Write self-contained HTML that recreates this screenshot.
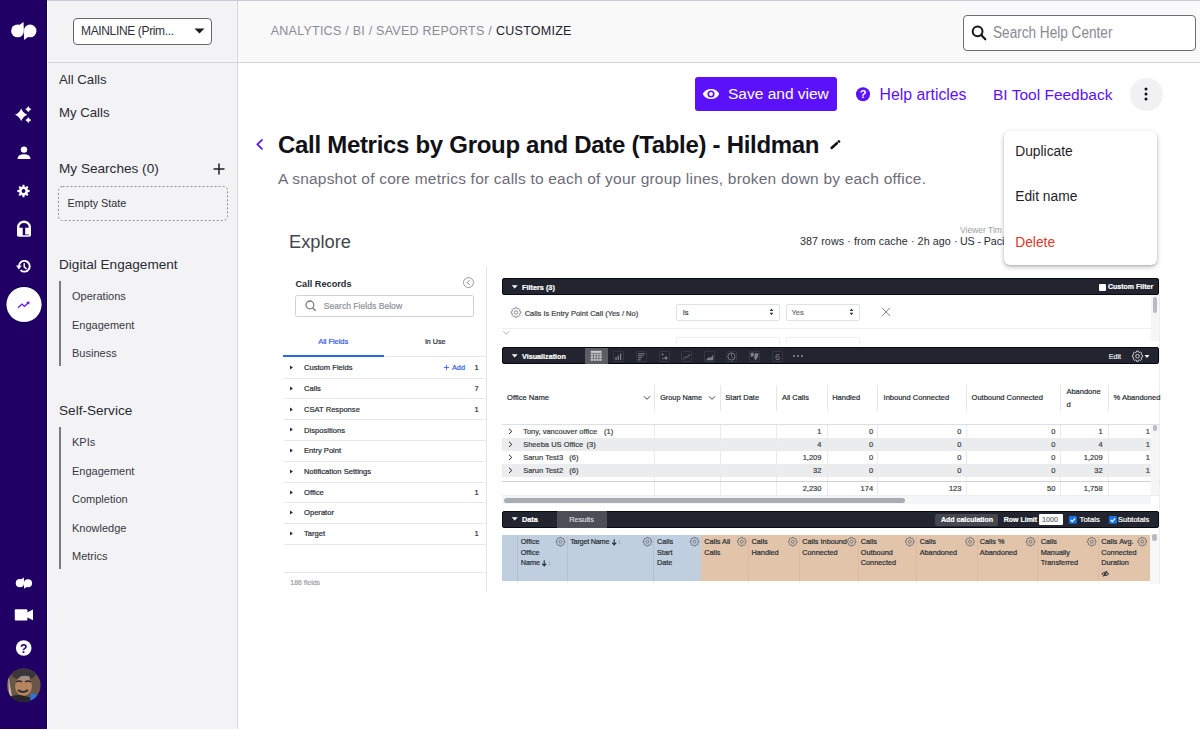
<!DOCTYPE html>
<html><head><meta charset="utf-8">
<style>
*{margin:0;padding:0;box-sizing:border-box}
html,body{width:1200px;height:730px;overflow:hidden;background:#fff;font-family:"Liberation Sans",sans-serif}
.a{position:absolute}
.t{position:absolute;white-space:nowrap;line-height:1}
.k{-webkit-text-stroke:0.2px currentColor}
</style></head><body>
<div class="a" style="left:0.00px;top:0.00px;width:47.00px;height:729.00px;background:#210066;"></div>
<div class="a" style="left:46.00px;top:0.00px;width:1.00px;height:729.00px;background:#0c004a;"></div>
<svg class="a" style="left:0;top:0" width="47" height="729" viewBox="0 0 47 729">
 <g fill="#fff">
  <!-- logo -->
  <circle cx="17.6" cy="30.9" r="6.45"/>
  <polygon points="19.6,24.8 23.5,21.9 24.1,31 19,31"/>
  <circle cx="30.1" cy="30.9" r="6.35"/>
  <polygon points="28,37 24.2,39.9 23.6,31 29,31"/>
  <path d="M24.1,24.5 L23.5,37.5" stroke="#210066" stroke-width="0.5" opacity="0.6"/>
  <!-- sparkles -->
  <path d="M21.2,108.6 Q22.936,113.064 27.4,114.8 Q22.936,116.536 21.2,121.0 Q19.464,116.536 15.0,114.8 Q19.464,113.064 21.2,108.6Z"/>
  <path d="M28.3,106.10000000000001 Q29.168,108.33200000000001 31.400000000000002,109.2 Q29.168,110.068 28.3,112.3 Q27.432000000000002,110.068 25.2,109.2 Q27.432000000000002,108.33200000000001 28.3,106.10000000000001Z"/>
  <path d="M28.3,116.9 Q29.168,119.132 31.400000000000002,120 Q29.168,120.868 28.3,123.1 Q27.432000000000002,120.868 25.2,120 Q27.432000000000002,119.132 28.3,116.9Z"/>
  <!-- person -->
  <circle cx="24" cy="149.6" r="3.2"/>
  <path d="M17.5,159 Q17.5,154.3 24,154.3 Q30.5,154.3 30.5,159Z"/>
  <!-- gear -->
  <path d="M27.83,189.77 L29.63,190.10 L29.63,191.90 L27.83,192.23 L27.43,193.19 L28.48,194.70 L27.20,195.98 L25.69,194.93 L24.73,195.33 L24.40,197.13 L22.60,197.13 L22.27,195.33 L21.31,194.93 L19.80,195.98 L18.52,194.70 L19.57,193.19 L19.17,192.23 L17.37,191.90 L17.37,190.10 L19.17,189.77 L19.57,188.81 L18.52,187.30 L19.80,186.02 L21.31,187.07 L22.27,186.67 L22.60,184.87 L24.40,184.87 L24.73,186.67 L25.69,187.07 L27.20,186.02 L28.48,187.30 L27.43,188.81Z M21.60,191.00 a1.9,1.9 0 1,0 3.80,0 a1.9,1.9 0 1,0 -3.80,0Z" fill-rule="evenodd"/>
  <!-- help -->
  <circle cx="23.7" cy="648" r="7.8"/>
 </g>
 <!-- headset -->
 <path fill="#fff" fill-rule="evenodd" d="M17,235 V227.4 A7,7 0 0 1 31,227.4 V235 Q31,236.8 29.2,236.8 H18.8 Q17,236.8 17,235 Z M19.2,227.7 A4.8,4.8 0 0 1 28.8,227.7 H25.2 V234.4 H29 V235.3 H22.7 V227.7 Z"/>
 <!-- history -->
 <g fill="none" stroke="#fff" stroke-width="1.9">
  <path d="M18.9,266.3 A5.4,5.4 0 1 1 20.5,270.1"/>
  <path d="M24.2,263.2 V266.8 L26.6,269" stroke-width="1.5"/>
 </g>
 <polygon fill="#fff" points="16,265.6 21.8,265.6 18.9,269.6"/>
 <!-- active analytics circle -->
 <circle cx="24" cy="304.5" r="18.4" fill="#0c004a"/><circle cx="24" cy="304.5" r="17.6" fill="#fff"/>
 <path d="M18,307.7 L22,304 L24.5,306.4 L28.2,302.8" fill="none" stroke="#5b12fb" stroke-width="1.25"/>
 <polygon fill="#5b12fb" points="26.3,301.9 29.6,301.4 29.1,304.7"/>
 <!-- small logo -->
 <g fill="#fff">
  <circle cx="19.9" cy="583.2" r="4.1"/>
  <polygon points="21.2,579.3 23.8,577.6 24.1,583.2 21,583.2"/>
  <circle cx="28" cy="583.2" r="4.05"/>
  <polygon points="26.6,587.1 24.2,588.8 23.8,583.2 27,583.2"/>
  <!-- video -->
  <rect x="14.8" y="609.2" width="12.6" height="11.4" rx="1"/>
  <polygon points="27,612.6 33,609.5 33,620.3 27,617.2"/>
 </g>
 <text x="23.7" y="652.6" font-family="Liberation Sans" font-weight="700" font-size="12" text-anchor="middle" fill="#210066">?</text>
 <!-- avatar -->
 <defs><clipPath id="avc"><circle cx="23.8" cy="685.3" r="16.8"/></clipPath></defs>
 <g clip-path="url(#avc)">
  <rect x="6" y="667" width="36" height="36" fill="#6a5647"/>
  <ellipse cx="23.5" cy="674" rx="12" ry="6" fill="#3a373b"/>
  <ellipse cx="23.5" cy="686" rx="8.5" ry="10" fill="#b58460"/>
  <ellipse cx="25" cy="678" rx="5" ry="2.2" fill="#9d8f88"/>
  <path d="M16,682 Q19,680 22,682 M25,682 Q28,680 31,682" stroke="#2a2a33" stroke-width="1.3" fill="none"/>
  <path d="M18,690 Q23,694 28,690" stroke="#2d2d35" stroke-width="2" fill="none"/>
  <path d="M8,672 Q10,686 12,696 L9,696Z" fill="#c9b7a6"/>
  <path d="M4,704 Q10,694 20,695 Q28,696 36,700 V704Z" fill="#26252b"/>
  <path d="M31,693 L37,695 L35,702 L30,700Z" fill="#2e73d8"/>
 </g>
</svg>
<div class="a" style="left:47.00px;top:0.00px;width:190.00px;height:729.00px;background:#f3f3f6;"></div>
<div class="a" style="left:236.00px;top:0.00px;width:1.00px;height:729.00px;background:#f8f8fa;"></div>
<div class="a" style="left:237.00px;top:0.00px;width:1.00px;height:729.00px;background:#d4d4da;"></div>
<div class="a" style="left:238.00px;top:0.00px;width:962.00px;height:62.00px;background:#f9f9fa;"></div>
<div class="a" style="left:47.00px;top:62.00px;width:1153.00px;height:1.00px;background:#d2d2d8;"></div>
<div class="a" style="left:47.00px;top:0.00px;width:1153.00px;height:1.00px;background:#c9c9d2;"></div>
<div class="a" style="left:47.00px;top:1.00px;width:1.00px;height:728.00px;background:#ffffff;"></div>
<div class="a" style="left:73.00px;top:18.00px;width:139.00px;height:27.00px;background:#fff;border:1.5px solid #67676f;border-radius:4px"></div>
<div class="t" style="left:81.00px;top:25.20px;font-size:12px;color:#2f2f37;font-weight:400;letter-spacing:-0.35px">MAINLINE (Prim...</div>
<svg class="a" style="left:194px;top:28px" width="11" height="6"><polygon points="0.5,0.5 10.5,0.5 5.5,5.5" fill="#1c1c22"/></svg>
<div class="t" style="left:59.00px;top:73.40px;font-size:13.2px;color:#2a2a33;font-weight:400;">All Calls</div>
<div class="t" style="left:59.00px;top:106.00px;font-size:13.2px;color:#2a2a33;font-weight:400;">My Calls</div>
<div class="t" style="left:59.00px;top:162.40px;font-size:13.6px;color:#2a2a33;font-weight:400;">My Searches (0)</div>
<svg class="a" style="left:213px;top:163px" width="12" height="12"><path d="M6,0.5V11.5M0.5,6H11.5" stroke="#222" stroke-width="1.5"/></svg>
<svg class="a" style="left:57.5px;top:185.5px" width="170" height="35"><rect x="0.5" y="0.5" width="169" height="34" rx="4" fill="none" stroke="#8e8e96" stroke-width="1" stroke-dasharray="2 2"/></svg>
<div class="t" style="left:67.50px;top:198.30px;font-size:10.8px;color:#2e2e36;font-weight:400;">Empty State</div>
<div class="t" style="left:59.00px;top:258.00px;font-size:13.6px;color:#2a2a33;font-weight:400;">Digital Engagement</div>
<div class="a" style="left:59.00px;top:281.00px;width:2.00px;height:85.00px;background:#7b7b84;"></div>
<div class="t" style="left:72.00px;top:291.10px;font-size:11px;color:#383842;font-weight:400;">Operations</div>
<div class="t" style="left:72.00px;top:320.20px;font-size:11px;color:#383842;font-weight:400;">Engagement</div>
<div class="t" style="left:72.00px;top:348.30px;font-size:11px;color:#383842;font-weight:400;">Business</div>
<div class="t" style="left:59.00px;top:403.70px;font-size:13.6px;color:#2a2a33;font-weight:400;">Self-Service</div>
<div class="a" style="left:59.00px;top:427.00px;width:2.00px;height:142.00px;background:#7b7b84;"></div>
<div class="t" style="left:72.00px;top:437.30px;font-size:11px;color:#383842;font-weight:400;">KPIs</div>
<div class="t" style="left:72.00px;top:466.10px;font-size:11px;color:#383842;font-weight:400;">Engagement</div>
<div class="t" style="left:72.00px;top:494.40px;font-size:11px;color:#383842;font-weight:400;">Completion</div>
<div class="t" style="left:72.00px;top:522.80px;font-size:11px;color:#383842;font-weight:400;">Knowledge</div>
<div class="t" style="left:72.00px;top:551.10px;font-size:11px;color:#383842;font-weight:400;">Metrics</div>
<div class="t" style="left:270.70px;top:25.30px;font-size:12.5px;color:#8b8b94;font-weight:400;letter-spacing:0.25px">ANALYTICS / BI / SAVED REPORTS /</div>
<div class="t" style="left:496.00px;top:25.30px;font-size:12.5px;color:#22222a;font-weight:400;letter-spacing:0.25px">CUSTOMIZE</div>
<div class="a" style="left:963.00px;top:15.00px;width:233.00px;height:36.00px;background:#fff;border:1.5px solid #6d6d76;border-radius:4px"></div>
<svg class="a" style="left:970px;top:24px" width="18" height="18"><circle cx="7.6" cy="7.3" r="4.9" fill="none" stroke="#15151a" stroke-width="2"/><path d="M11,10.8 L15.3,15.3" stroke="#15151a" stroke-width="2.2" stroke-linecap="round"/></svg>
<div class="t" style="left:993.30px;top:25.20px;font-size:16px;color:#8a8a93;font-weight:400;transform:scaleX(0.85);transform-origin:0 0">Search Help Center</div>
<div class="a" style="left:695.00px;top:77.00px;width:142.00px;height:34.00px;background:#5b12fb;border-radius:3px"></div>
<svg class="a" style="left:700px;top:85px" width="22" height="18"><path d="M2.8,9 C5.5,2.2 16.5,2.2 19.2,9 C16.5,15.8 5.5,15.8 2.8,9Z" fill="#fff"/><circle cx="11" cy="9" r="3.6" fill="#5b12fb"/><circle cx="11" cy="9" r="1.9" fill="#fff"/></svg>
<div class="t" style="left:728.00px;top:86.20px;font-size:15.5px;color:#fff;font-weight:400;">Save and view</div>
<svg class="a" style="left:854px;top:86px" width="18" height="18"><circle cx="9" cy="8.3" r="7" fill="#5b12fb"/><text x="9" y="12.4" font-family="Liberation Sans" font-weight="700" font-size="11" text-anchor="middle" fill="#fff">?</text></svg>
<div class="t" style="left:879.60px;top:86.60px;font-size:15.8px;color:#5b12fb;font-weight:400;">Help articles</div>
<div class="t" style="left:993.00px;top:86.60px;font-size:15.5px;color:#5b12fb;font-weight:400;">BI Tool Feedback</div>
<div class="a" style="left:1129.5px;top:77.5px;width:33px;height:33px;border-radius:50%;background:#f1f1f3"></div>
<svg class="a" style="left:1140px;top:86px" width="12" height="16"><circle cx="6" cy="3" r="1.5" fill="#111"/><circle cx="6" cy="8" r="1.5" fill="#111"/><circle cx="6" cy="13" r="1.5" fill="#111"/></svg>
<svg class="a" style="left:252.5px;top:137px" width="12" height="15"><path d="M9,2.8 L4.3,7.3 L9,11.8" fill="none" stroke="#5b12fb" stroke-width="1.7" stroke-linecap="round" stroke-linejoin="round"/></svg>
<div class="t" style="left:278.00px;top:132.50px;font-size:24px;color:#111117;font-weight:700;letter-spacing:-0.3px">Call Metrics by Group and Date (Table) - Hildman</div>
<svg class="a" style="left:828px;top:138px" width="14" height="13"><path d="M3.6,10 L8.9,5.2" stroke="#111" stroke-width="2.5" stroke-linecap="round"/><path d="M10.6,3.2 L11.2,3.7" stroke="#111" stroke-width="2.3" stroke-linecap="round"/></svg>
<div class="t" style="left:278.00px;top:170.75px;font-size:15.5px;color:#6d6d78;font-weight:400;letter-spacing:0.21px">A snapshot of core metrics for calls to each of your group lines, broken down by each office.</div>
<div class="t" style="left:289.00px;top:233.30px;font-size:18.3px;color:#42474d;font-weight:400;">Explore</div>
<div class="t" style="left:800.00px;top:235.70px;font-size:10.7px;color:#262d33;font-weight:400;letter-spacing:0.1px">387 rows · from cache · 2h ago ·</div>
<div class="t" style="left:960.00px;top:235.70px;font-size:10.7px;color:#262d33;font-weight:400;letter-spacing:-0.1px">US - Pacific</div>
<div class="t" style="left:960.00px;top:225.80px;font-size:8.5px;color:#9aa0a6;font-weight:400;">Viewer Tim</div>
<div class="t" style="left:295.40px;top:279.50px;font-size:9.2px;color:#262d33;font-weight:700;">Call Records</div>
<svg class="a" style="left:462px;top:276px" width="13" height="13"><circle cx="6.5" cy="6.6" r="5" fill="none" stroke="#8a9099" stroke-width="0.9"/><path d="M7.6,4.3 L5.3,6.6 L7.6,8.9" fill="none" stroke="#6a7078" stroke-width="0.9"/></svg>
<div class="a" style="left:295.40px;top:294.60px;width:178.30px;height:22.40px;background:#fff;border:1px solid #cfd3d8;border-radius:2.5px"></div>
<svg class="a" style="left:303px;top:299px" width="14" height="14"><circle cx="6.9" cy="5.9" r="3.9" fill="none" stroke="#7a8088" stroke-width="1.3"/><path d="M9.6,8.7 L12.6,11.7" stroke="#7a8088" stroke-width="1.5"/></svg>
<div class="t k" style="left:323.75px;top:302.00px;font-size:8.6px;color:#8e949b;font-weight:400;">Search Fields Below</div>
<div class="t k" style="left:318.20px;top:338.48px;font-size:7.5px;color:#2f5be8;font-weight:400;letter-spacing:-0.05px">All Fields</div>
<div class="t k" style="left:424.90px;top:339.34px;font-size:7.1px;color:#262d33;font-weight:400;">In Use</div>
<div class="a" style="left:384.50px;top:356.00px;width:102.00px;height:1.00px;background:#e4e6e9;"></div>
<div class="a" style="left:282.60px;top:355.00px;width:101.90px;height:2.00px;background:#2f66e8;"></div>
<div class="a" style="left:486.00px;top:266.00px;width:1.00px;height:326.00px;background:#e4e6e9;"></div>
<svg class="a" style="left:289px;top:365.0px" width="5" height="5"><polygon points="1,0.6 3.9,2.5 1,4.4" fill="#262d33"/></svg>
<div class="t k" style="left:304.00px;top:364.11px;font-size:7.6px;color:#262d33;font-weight:400;">Custom Fields</div>
<div class="t k" style="left:474.50px;top:364.08px;font-size:7.5px;color:#262d33;font-weight:400;">1</div>
<div class="a" style="left:283.50px;top:377.50px;width:202.50px;height:1.00px;background:#e6e8eb;"></div>
<svg class="a" style="left:443px;top:364.0px" width="7" height="7"><path d="M3.5,0.8V6.2M0.8,3.5H6.2" stroke="#2f5be8" stroke-width="0.8"/></svg>
<div class="t k" style="left:452.00px;top:364.01px;font-size:7.3px;color:#2f5be8;font-weight:400;">Add</div>
<svg class="a" style="left:289px;top:385.9px" width="5" height="5"><polygon points="1,0.6 3.9,2.5 1,4.4" fill="#262d33"/></svg>
<div class="t k" style="left:304.00px;top:385.01px;font-size:7.6px;color:#262d33;font-weight:400;">Calls</div>
<div class="t k" style="left:474.50px;top:384.98px;font-size:7.5px;color:#262d33;font-weight:400;">7</div>
<div class="a" style="left:283.50px;top:398.30px;width:202.50px;height:1.00px;background:#e6e8eb;"></div>
<svg class="a" style="left:289px;top:406.6px" width="5" height="5"><polygon points="1,0.6 3.9,2.5 1,4.4" fill="#262d33"/></svg>
<div class="t k" style="left:304.00px;top:405.76px;font-size:7.6px;color:#262d33;font-weight:400;">CSAT Response</div>
<div class="t k" style="left:474.50px;top:405.73px;font-size:7.5px;color:#262d33;font-weight:400;">1</div>
<div class="a" style="left:283.50px;top:419.00px;width:202.50px;height:1.00px;background:#e6e8eb;"></div>
<svg class="a" style="left:289px;top:427.4px" width="5" height="5"><polygon points="1,0.6 3.9,2.5 1,4.4" fill="#262d33"/></svg>
<div class="t k" style="left:304.00px;top:426.56px;font-size:7.6px;color:#262d33;font-weight:400;">Dispositions</div>
<div class="a" style="left:283.50px;top:439.90px;width:202.50px;height:1.00px;background:#e6e8eb;"></div>
<svg class="a" style="left:289px;top:448.4px" width="5" height="5"><polygon points="1,0.6 3.9,2.5 1,4.4" fill="#262d33"/></svg>
<div class="t k" style="left:304.00px;top:447.46px;font-size:7.6px;color:#262d33;font-weight:400;">Entry Point</div>
<div class="a" style="left:283.50px;top:460.80px;width:202.50px;height:1.00px;background:#e6e8eb;"></div>
<svg class="a" style="left:289px;top:469.1px" width="5" height="5"><polygon points="1,0.6 3.9,2.5 1,4.4" fill="#262d33"/></svg>
<div class="t k" style="left:304.00px;top:468.26px;font-size:7.6px;color:#262d33;font-weight:400;">Notification Settings</div>
<div class="a" style="left:283.50px;top:481.50px;width:202.50px;height:1.00px;background:#e6e8eb;"></div>
<svg class="a" style="left:289px;top:489.7px" width="5" height="5"><polygon points="1,0.6 3.9,2.5 1,4.4" fill="#262d33"/></svg>
<div class="t k" style="left:304.00px;top:488.81px;font-size:7.6px;color:#262d33;font-weight:400;">Office</div>
<div class="t k" style="left:474.50px;top:488.78px;font-size:7.5px;color:#262d33;font-weight:400;">1</div>
<div class="a" style="left:283.50px;top:501.90px;width:202.50px;height:1.00px;background:#e6e8eb;"></div>
<svg class="a" style="left:289px;top:510.3px" width="5" height="5"><polygon points="1,0.6 3.9,2.5 1,4.4" fill="#262d33"/></svg>
<div class="t k" style="left:304.00px;top:509.41px;font-size:7.6px;color:#262d33;font-weight:400;">Operator</div>
<div class="a" style="left:283.50px;top:522.70px;width:202.50px;height:1.00px;background:#e6e8eb;"></div>
<svg class="a" style="left:289px;top:531.1px" width="5" height="5"><polygon points="1,0.6 3.9,2.5 1,4.4" fill="#262d33"/></svg>
<div class="t k" style="left:304.00px;top:530.21px;font-size:7.6px;color:#262d33;font-weight:400;">Target</div>
<div class="t k" style="left:474.50px;top:530.18px;font-size:7.5px;color:#262d33;font-weight:400;">1</div>
<div class="a" style="left:283.50px;top:543.50px;width:202.50px;height:1.00px;background:#e6e8eb;"></div>
<div class="a" style="left:283.50px;top:571.50px;width:202.50px;height:1.00px;background:#e6e8eb;"></div>
<div class="t k" style="left:290.30px;top:579.69px;font-size:6.95px;color:#9aa0a6;font-weight:400;">186 fields</div>
<div class="a" style="left:502.00px;top:278.00px;width:657.20px;height:17.20px;background:#22252f;border:1px solid #070a12;border-radius:2px"></div>
<svg class="a" style="left:511px;top:284px" width="8" height="6"><polygon points="0.8,1.2 6.6,1.2 3.7,4.4" fill="#fff"/></svg>
<div class="t k" style="left:522.00px;top:283.80px;font-size:7.3px;color:#fff;font-weight:700;">Filters (3)</div>
<div class="a" style="left:1098.50px;top:283.70px;width:7.30px;height:7.50px;background:#fff;border-radius:1px"></div>
<div class="t k" style="left:1108.00px;top:283.20px;font-size:7px;color:#fff;font-weight:700;">Custom Filter</div>
<svg class="a" style="left:0;top:0" width="1200" height="730" viewBox="0 0 1200 730"><path d="M519.73,311.36 L520.83,311.69 L520.83,313.31 L519.73,313.64 L519.44,314.33 L519.99,315.34 L518.84,316.49 L517.83,315.94 L517.14,316.23 L516.81,317.33 L515.19,317.33 L514.86,316.23 L514.17,315.94 L513.16,316.49 L512.01,315.34 L512.56,314.33 L512.27,313.64 L511.17,313.31 L511.17,311.69 L512.27,311.36 L512.56,310.67 L512.01,309.66 L513.16,308.51 L514.17,309.06 L514.86,308.77 L515.19,307.67 L516.81,307.67 L517.14,308.77 L517.83,309.06 L518.84,308.51 L519.99,309.66 L519.44,310.67Z" fill="none" stroke="#6a7078" stroke-width="0.8"/><circle cx="516" cy="312.5" r="1.7" fill="none" stroke="#6a7078" stroke-width="0.8"/></svg>
<div class="t k" style="left:524.70px;top:309.58px;font-size:7.5px;color:#3a3f45;font-weight:400;">Calls Is Entry Point Call (Yes / No)</div>
<div class="a" style="left:676.00px;top:303.50px;width:103.80px;height:17.10px;background:#fff;border:1px solid #dfe2e6;border-radius:2px"></div>
<div class="t k" style="left:683.00px;top:308.58px;font-size:7.5px;color:#3a3f45;font-weight:400;">is</div>
<svg class="a" style="left:769px;top:308px" width="5" height="8"><polygon points="2.5,0.5 4.3,3 0.7,3" fill="#262d33"/><polygon points="2.5,7.3 4.3,4.8 0.7,4.8" fill="#262d33"/></svg>
<div class="a" style="left:786.00px;top:303.50px;width:74.40px;height:17.10px;background:#fff;border:1px solid #dfe2e6;border-radius:2px"></div>
<div class="t k" style="left:791.50px;top:308.58px;font-size:7.5px;color:#6a7078;font-weight:400;">Yes</div>
<svg class="a" style="left:849px;top:308px" width="5" height="8"><polygon points="2.5,0.5 4.3,3 0.7,3" fill="#262d33"/><polygon points="2.5,7.3 4.3,4.8 0.7,4.8" fill="#262d33"/></svg>
<svg class="a" style="left:880px;top:306px" width="12" height="12"><path d="M2,1.8 L10,9.9 M10,1.8 L2,9.9" stroke="#6a7078" stroke-width="0.9"/></svg>
<div class="a" style="left:502.00px;top:328.00px;width:648.50px;height:1.00px;background:#eceef0;"></div>
<svg class="a" style="left:502px;top:329px" width="9" height="8"><path d="M1.2,2.3 L4.3,5.3 L7.4,2.3" fill="none" stroke="#9aa0a6" stroke-width="0.8"/></svg>
<div class="a" style="left:676.00px;top:337.00px;width:103.80px;height:8.00px;background:#fff;border:1px solid #eceef0;border-bottom:none;border-radius:2px 2px 0 0"></div>
<div class="a" style="left:786.00px;top:337.00px;width:74.40px;height:8.00px;background:#fff;border:1px solid #eceef0;border-bottom:none;border-radius:2px 2px 0 0"></div>
<div class="a" style="left:1150.50px;top:295.00px;width:8.50px;height:46.00px;background:#f4f5f6;"></div>
<div class="a" style="left:1153.00px;top:297.40px;width:4.10px;height:15.80px;background:#b8bcc2;border-radius:2px"></div>
<div class="a" style="left:1159.00px;top:295.00px;width:1.00px;height:289.00px;background:#eceef0;"></div>
<div class="a" style="left:502.00px;top:347.30px;width:657.20px;height:17.10px;background:#22252f;border:1px solid #070a12;border-radius:2px"></div>
<svg class="a" style="left:511px;top:353px" width="8" height="6"><polygon points="0.8,1.2 6.6,1.2 3.7,4.4" fill="#fff"/></svg>
<div class="t k" style="left:522.00px;top:352.80px;font-size:7.2px;color:#fff;font-weight:700;">Visualization</div>
<div class="a" style="left:584.80px;top:347.50px;width:23.00px;height:16.20px;background:#5a5d63;"></div>
<svg class="a" style="left:590px;top:350px" width="13" height="12"><rect x="0.8" y="0.8" width="10.8" height="10" fill="#c9cbcf"/><path d="M0.8,3.3H11.6M0.8,5.8H11.6M0.8,8.3H11.6M3.5,3.3V10.8M6.2,3.3V10.8M8.9,3.3V10.8" stroke="#5a5d63" stroke-width="0.7"/></svg>
<svg class="a" style="left:612.8px;top:350.8px" width="11" height="11"><rect x="0.4" y="0.4" width="10.2" height="10.2" rx="1" fill="none" stroke="#3d4049" stroke-width="0.8"/><path d="M3,9V6M5.3,9V4.5M7.6,9V2.5" stroke="#7b7f87" stroke-width="1.3"/></svg>
<svg class="a" style="left:635.8px;top:350.8px" width="11" height="11"><rect x="0.4" y="0.4" width="10.2" height="10.2" rx="1" fill="none" stroke="#3d4049" stroke-width="0.8"/><path d="M2,2.8H9M2,4.8H7.5M2,6.8H6M2,8.8H4.5" stroke="#7b7f87" stroke-width="1"/></svg>
<svg class="a" style="left:658.5px;top:350.8px" width="11" height="11"><rect x="0.4" y="0.4" width="10.2" height="10.2" rx="1" fill="none" stroke="#3d4049" stroke-width="0.8"/><circle cx="3.5" cy="3.5" r="1" fill="#7b7f87"/><circle cx="7" cy="7" r="1.6" fill="#7b7f87"/><circle cx="4" cy="7.5" r="0.8" fill="#7b7f87"/></svg>
<svg class="a" style="left:680.9px;top:350.8px" width="11" height="11"><rect x="0.4" y="0.4" width="10.2" height="10.2" rx="1" fill="none" stroke="#3d4049" stroke-width="0.8"/><path d="M2,8.5 L5,5.5 L6.5,6.5 L9,3" fill="none" stroke="#7b7f87" stroke-width="0.8"/></svg>
<svg class="a" style="left:703.9px;top:350.8px" width="11" height="11"><rect x="0.4" y="0.4" width="10.2" height="10.2" rx="1" fill="none" stroke="#3d4049" stroke-width="0.8"/><path d="M1.8,9.2 L5,6 L6.5,7 L9.2,3.5 V9.2Z" fill="#7b7f87"/></svg>
<svg class="a" style="left:726.3px;top:350.8px" width="11" height="11"><rect x="0.4" y="0.4" width="10.2" height="10.2" rx="1" fill="none" stroke="#3d4049" stroke-width="0.8"/><circle cx="5.5" cy="5.5" r="3.6" fill="none" stroke="#7b7f87" stroke-width="0.9"/><path d="M5.5,2.5V5.5L7.5,7.5" stroke="#7b7f87" stroke-width="0.8" fill="none"/></svg>
<svg class="a" style="left:748.9px;top:350.8px" width="11" height="11"><rect x="0.4" y="0.4" width="10.2" height="10.2" rx="1" fill="none" stroke="#3d4049" stroke-width="0.8"/><path d="M1.5,2 L4.5,1.5 L5,5 L2,6Z M6,2 L9.5,2.5 L9,6 L6.5,9.5 L5,7Z" fill="#7b7f87"/></svg>
<svg class="a" style="left:771.9px;top:350.8px" width="11" height="11"><rect x="0.4" y="0.4" width="10.2" height="10.2" rx="1" fill="none" stroke="#3d4049" stroke-width="0.8"/><text x="5.5" y="9" font-family="Liberation Sans" font-size="9" text-anchor="middle" fill="#7b7f87">6</text></svg>
<svg class="a" style="left:792px;top:353px" width="13" height="6"><circle cx="2" cy="3" r="1" fill="#8a8e95"/><circle cx="6" cy="3" r="1" fill="#8a8e95"/><circle cx="10" cy="3" r="1" fill="#8a8e95"/></svg>
<div class="t k" style="left:1108.80px;top:353.80px;font-size:7.1px;color:#e8e9eb;font-weight:400;">Edit</div>
<svg class="a" style="left:0;top:0" width="1200" height="730" viewBox="0 0 1200 730"><path d="M1141.42,355.00 L1142.63,355.34 L1142.63,357.06 L1141.42,357.40 L1141.12,358.13 L1141.73,359.22 L1140.52,360.43 L1139.43,359.82 L1138.70,360.12 L1138.36,361.33 L1136.64,361.33 L1136.30,360.12 L1135.57,359.82 L1134.48,360.43 L1133.27,359.22 L1133.88,358.13 L1133.58,357.40 L1132.37,357.06 L1132.37,355.34 L1133.58,355.00 L1133.88,354.27 L1133.27,353.18 L1134.48,351.97 L1135.57,352.58 L1136.30,352.28 L1136.64,351.07 L1138.36,351.07 L1138.70,352.28 L1139.43,352.58 L1140.52,351.97 L1141.73,353.18 L1141.12,354.27Z" fill="none" stroke="#d9dbde" stroke-width="0.9"/><circle cx="1137.5" cy="356.2" r="1.8" fill="none" stroke="#d9dbde" stroke-width="0.9"/><polygon points="1144.5,355 1149.4,355 1147,358" fill="#fff"/></svg>
<div class="a" style="left:654.00px;top:384.60px;width:1.00px;height:26.20px;background:#e4e6e9;"></div>
<div class="a" style="left:719.70px;top:384.60px;width:1.00px;height:26.20px;background:#e4e6e9;"></div>
<div class="a" style="left:775.80px;top:384.60px;width:1.00px;height:26.20px;background:#e4e6e9;"></div>
<div class="a" style="left:826.80px;top:384.60px;width:1.00px;height:26.20px;background:#e4e6e9;"></div>
<div class="a" style="left:877.20px;top:384.60px;width:1.00px;height:26.20px;background:#e4e6e9;"></div>
<div class="a" style="left:966.10px;top:384.60px;width:1.00px;height:26.20px;background:#e4e6e9;"></div>
<div class="a" style="left:1060.00px;top:384.60px;width:1.00px;height:26.20px;background:#e4e6e9;"></div>
<div class="a" style="left:1108.10px;top:384.60px;width:1.00px;height:26.20px;background:#e4e6e9;"></div>
<div class="t k" style="left:507.00px;top:394.11px;font-size:7.6px;color:#262d33;font-weight:400;">Office Name</div>
<div class="t k" style="left:660.20px;top:394.01px;font-size:7.3px;color:#262d33;font-weight:400;">Group Name</div>
<div class="t k" style="left:725.30px;top:394.08px;font-size:7.5px;color:#262d33;font-weight:400;">Start Date</div>
<div class="t k" style="left:782.00px;top:394.06px;font-size:7.45px;color:#262d33;font-weight:400;">All Calls</div>
<div class="t k" style="left:832.20px;top:394.08px;font-size:7.5px;color:#262d33;font-weight:400;">Handled</div>
<div class="t k" style="left:883.60px;top:394.08px;font-size:7.5px;color:#262d33;font-weight:400;">Inbound Connected</div>
<div class="t k" style="left:971.60px;top:394.08px;font-size:7.5px;color:#262d33;font-weight:400;">Outbound Connected</div>
<div class="t k" style="left:1066.40px;top:387.58px;font-size:7.5px;color:#262d33;font-weight:400;">Abandone</div>
<div class="t k" style="left:1066.40px;top:400.58px;font-size:7.5px;color:#262d33;font-weight:400;">d</div>
<div class="t k" style="left:1113.60px;top:394.08px;font-size:7.5px;color:#262d33;font-weight:400;">% Abandoned</div>
<svg class="a" style="left:643.0px;top:394.5px" width="8" height="6"><path d="M1,1.3 L4,4.3 L7,1.3" fill="none" stroke="#262d33" stroke-width="0.9"/></svg>
<svg class="a" style="left:708.3px;top:394.5px" width="8" height="6"><path d="M1,1.3 L4,4.3 L7,1.3" fill="none" stroke="#262d33" stroke-width="0.9"/></svg>
<div class="a" style="left:502.00px;top:423.50px;width:658.00px;height:1.50px;background:#dcdfe3;"></div>
<svg class="a" style="left:507px;top:427.9px" width="7" height="7"><path d="M2,0.8 L4.8,3.4 L2,6" fill="none" stroke="#262d33" stroke-width="1"/></svg>
<div class="t k" style="left:523.20px;top:427.68px;font-size:7.5px;color:#3a3f45;font-weight:400;">Tony, vancouver office</div>
<div class="t k" style="left:604.00px;top:427.68px;font-size:7.5px;color:#3a3f45;font-weight:400;">(1)</div>
<div class="t k" style="right:378.60px;top:427.68px;font-size:7.5px;color:#3a3f45;font-weight:400;">1</div>
<div class="t k" style="right:326.90px;top:427.68px;font-size:7.5px;color:#3a3f45;font-weight:400;">0</div>
<div class="t k" style="right:238.60px;top:427.68px;font-size:7.5px;color:#3a3f45;font-weight:400;">0</div>
<div class="t k" style="right:144.70px;top:427.68px;font-size:7.5px;color:#3a3f45;font-weight:400;">0</div>
<div class="t k" style="right:97.40px;top:427.68px;font-size:7.5px;color:#3a3f45;font-weight:400;">1</div>
<div class="t k" style="right:50.00px;top:427.68px;font-size:7.5px;color:#3a3f45;font-weight:400;">1</div>
<div class="a" style="left:502.00px;top:437.70px;width:648.50px;height:12.90px;background:#ebecee;"></div>
<svg class="a" style="left:507px;top:440.9px" width="7" height="7"><path d="M2,0.8 L4.8,3.4 L2,6" fill="none" stroke="#262d33" stroke-width="1"/></svg>
<div class="t k" style="left:523.20px;top:440.73px;font-size:7.5px;color:#3a3f45;font-weight:400;">Sheeba US Office</div>
<div class="t k" style="left:586.50px;top:440.73px;font-size:7.5px;color:#3a3f45;font-weight:400;">(3)</div>
<div class="t k" style="right:378.60px;top:440.73px;font-size:7.5px;color:#3a3f45;font-weight:400;">4</div>
<div class="t k" style="right:326.90px;top:440.73px;font-size:7.5px;color:#3a3f45;font-weight:400;">0</div>
<div class="t k" style="right:238.60px;top:440.73px;font-size:7.5px;color:#3a3f45;font-weight:400;">0</div>
<div class="t k" style="right:144.70px;top:440.73px;font-size:7.5px;color:#3a3f45;font-weight:400;">0</div>
<div class="t k" style="right:97.40px;top:440.73px;font-size:7.5px;color:#3a3f45;font-weight:400;">4</div>
<div class="t k" style="right:50.00px;top:440.73px;font-size:7.5px;color:#3a3f45;font-weight:400;">1</div>
<svg class="a" style="left:507px;top:454.1px" width="7" height="7"><path d="M2,0.8 L4.8,3.4 L2,6" fill="none" stroke="#262d33" stroke-width="1"/></svg>
<div class="t k" style="left:523.20px;top:453.83px;font-size:7.5px;color:#3a3f45;font-weight:400;">Sarun Test3</div>
<div class="t k" style="left:569.30px;top:453.83px;font-size:7.5px;color:#3a3f45;font-weight:400;">(6)</div>
<div class="t k" style="right:378.60px;top:453.83px;font-size:7.5px;color:#3a3f45;font-weight:400;">1,209</div>
<div class="t k" style="right:326.90px;top:453.83px;font-size:7.5px;color:#3a3f45;font-weight:400;">0</div>
<div class="t k" style="right:238.60px;top:453.83px;font-size:7.5px;color:#3a3f45;font-weight:400;">0</div>
<div class="t k" style="right:144.70px;top:453.83px;font-size:7.5px;color:#3a3f45;font-weight:400;">0</div>
<div class="t k" style="right:97.40px;top:453.83px;font-size:7.5px;color:#3a3f45;font-weight:400;">1,209</div>
<div class="t k" style="right:50.00px;top:453.83px;font-size:7.5px;color:#3a3f45;font-weight:400;">1</div>
<div class="a" style="left:502.00px;top:463.90px;width:648.50px;height:13.10px;background:#ebecee;"></div>
<svg class="a" style="left:507px;top:467.2px" width="7" height="7"><path d="M2,0.8 L4.8,3.4 L2,6" fill="none" stroke="#262d33" stroke-width="1"/></svg>
<div class="t k" style="left:523.20px;top:467.03px;font-size:7.5px;color:#3a3f45;font-weight:400;">Sarun Test2</div>
<div class="t k" style="left:569.30px;top:467.03px;font-size:7.5px;color:#3a3f45;font-weight:400;">(6)</div>
<div class="t k" style="right:378.60px;top:467.03px;font-size:7.5px;color:#3a3f45;font-weight:400;">32</div>
<div class="t k" style="right:326.90px;top:467.03px;font-size:7.5px;color:#3a3f45;font-weight:400;">0</div>
<div class="t k" style="right:238.60px;top:467.03px;font-size:7.5px;color:#3a3f45;font-weight:400;">0</div>
<div class="t k" style="right:144.70px;top:467.03px;font-size:7.5px;color:#3a3f45;font-weight:400;">0</div>
<div class="t k" style="right:97.40px;top:467.03px;font-size:7.5px;color:#3a3f45;font-weight:400;">32</div>
<div class="t k" style="right:50.00px;top:467.03px;font-size:7.5px;color:#3a3f45;font-weight:400;">1</div>
<div class="a" style="left:654.00px;top:424.50px;width:1.00px;height:70.50px;background:#e9ebee;"></div>
<div class="a" style="left:719.70px;top:424.50px;width:1.00px;height:70.50px;background:#e9ebee;"></div>
<div class="a" style="left:775.80px;top:424.50px;width:1.00px;height:70.50px;background:#e9ebee;"></div>
<div class="a" style="left:826.80px;top:424.50px;width:1.00px;height:70.50px;background:#e9ebee;"></div>
<div class="a" style="left:877.20px;top:424.50px;width:1.00px;height:70.50px;background:#e9ebee;"></div>
<div class="a" style="left:966.10px;top:424.50px;width:1.00px;height:70.50px;background:#e9ebee;"></div>
<div class="a" style="left:1060.00px;top:424.50px;width:1.00px;height:70.50px;background:#e9ebee;"></div>
<div class="a" style="left:1108.10px;top:424.50px;width:1.00px;height:70.50px;background:#e9ebee;"></div>
<div class="a" style="left:502.00px;top:480.50px;width:658.00px;height:1.50px;background:#cfd3d8;"></div>
<div class="t k" style="right:378.60px;top:485.28px;font-size:7.5px;color:#3a3f45;font-weight:400;">2,230</div>
<div class="t k" style="right:326.90px;top:485.28px;font-size:7.5px;color:#3a3f45;font-weight:400;">174</div>
<div class="t k" style="right:238.60px;top:485.28px;font-size:7.5px;color:#3a3f45;font-weight:400;">123</div>
<div class="t k" style="right:144.70px;top:485.28px;font-size:7.5px;color:#3a3f45;font-weight:400;">50</div>
<div class="t k" style="right:97.40px;top:485.28px;font-size:7.5px;color:#3a3f45;font-weight:400;">1,758</div>
<div class="a" style="left:1150.50px;top:424.50px;width:8.50px;height:70.50px;background:#f4f5f6;"></div>
<div class="a" style="left:1153.00px;top:424.60px;width:4.10px;height:6.90px;background:#b8bcc2;border-radius:2px"></div>
<div class="a" style="left:502.00px;top:495.00px;width:658.00px;height:1.00px;background:#eceef0;"></div>
<div class="a" style="left:502.00px;top:496.00px;width:648.50px;height:8.00px;background:#f4f5f6;"></div>
<div class="a" style="left:504.00px;top:497.80px;width:400.50px;height:4.80px;background:#a9adb3;border-radius:2.5px"></div>
<div class="a" style="left:502.00px;top:511.00px;width:656.50px;height:17.00px;background:#22252f;border:1px solid #070a12;border-radius:2px"></div>
<svg class="a" style="left:511px;top:516px" width="8" height="6"><polygon points="0.8,1.2 6.6,1.2 3.7,4.4" fill="#fff"/></svg>
<div class="t k" style="left:522.00px;top:516.00px;font-size:7.3px;color:#fff;font-weight:700;">Data</div>
<div class="a" style="left:556.80px;top:511.00px;width:50.00px;height:16.70px;background:#4b4e55;"></div>
<div class="t k" style="left:569.20px;top:516.00px;font-size:7.4px;color:#d9dbde;font-weight:400;">Results</div>
<div class="a" style="left:935.20px;top:513.70px;width:63.20px;height:12.30px;background:#45484f;border-radius:2px"></div>
<div class="t k" style="left:941.00px;top:516.30px;font-size:7px;color:#fff;font-weight:700;">Add calculation</div>
<div class="t k" style="left:1003.70px;top:516.30px;font-size:7px;color:#fff;font-weight:700;">Row Limit</div>
<div class="a" style="left:1038.70px;top:513.70px;width:23.90px;height:11.70px;background:#fff;border-radius:1px"></div>
<div class="t k" style="left:1042.00px;top:516.30px;font-size:7.2px;color:#6a7078;font-weight:400;">1000</div>
<svg class="a" style="left:1069.3px;top:515.5px" width="8" height="8"><rect x="0" y="0" width="7.8" height="7.8" rx="1.3" fill="#1a73e8"/><path d="M1.7,3.9 L3.3,5.6 L6.2,2.3" fill="none" stroke="#fff" stroke-width="1.1"/></svg>
<svg class="a" style="left:1108.6px;top:515.5px" width="8" height="8"><rect x="0" y="0" width="7.8" height="7.8" rx="1.3" fill="#1a73e8"/><path d="M1.7,3.9 L3.3,5.6 L6.2,2.3" fill="none" stroke="#fff" stroke-width="1.1"/></svg>
<div class="t k" style="left:1079.50px;top:516.30px;font-size:7.8px;color:#fff;font-weight:400;">Totals</div>
<div class="t k" style="left:1118.00px;top:516.30px;font-size:7.5px;color:#fff;font-weight:400;">Subtotals</div>
<div class="a" style="left:502.00px;top:534.70px;width:199.00px;height:46.10px;background:#c0cfe0;"></div>
<div class="a" style="left:701.00px;top:534.70px;width:449.30px;height:46.10px;background:#e2c4ab;"></div>
<div class="a" style="left:516.90px;top:534.70px;width:1.00px;height:46.10px;background:#b3c2d3;"></div>
<div class="a" style="left:516.90px;top:580.80px;width:1.00px;height:3.20px;background:#eef0f2;"></div>
<div class="a" style="left:566.90px;top:534.70px;width:1.00px;height:46.10px;background:#b3c2d3;"></div>
<div class="a" style="left:566.90px;top:580.80px;width:1.00px;height:3.20px;background:#eef0f2;"></div>
<div class="a" style="left:653.30px;top:534.70px;width:1.00px;height:46.10px;background:#b3c2d3;"></div>
<div class="a" style="left:653.30px;top:580.80px;width:1.00px;height:3.20px;background:#eef0f2;"></div>
<div class="a" style="left:747.80px;top:534.70px;width:1.00px;height:46.10px;background:#dbbba2;"></div>
<div class="a" style="left:747.80px;top:580.80px;width:1.00px;height:3.20px;background:#eef0f2;"></div>
<div class="a" style="left:798.90px;top:534.70px;width:1.00px;height:46.10px;background:#dbbba2;"></div>
<div class="a" style="left:798.90px;top:580.80px;width:1.00px;height:3.20px;background:#eef0f2;"></div>
<div class="a" style="left:857.50px;top:534.70px;width:1.00px;height:46.10px;background:#dbbba2;"></div>
<div class="a" style="left:857.50px;top:580.80px;width:1.00px;height:3.20px;background:#eef0f2;"></div>
<div class="a" style="left:915.70px;top:534.70px;width:1.00px;height:46.10px;background:#dbbba2;"></div>
<div class="a" style="left:915.70px;top:580.80px;width:1.00px;height:3.20px;background:#eef0f2;"></div>
<div class="a" style="left:976.90px;top:534.70px;width:1.00px;height:46.10px;background:#dbbba2;"></div>
<div class="a" style="left:976.90px;top:580.80px;width:1.00px;height:3.20px;background:#eef0f2;"></div>
<div class="a" style="left:1036.70px;top:534.70px;width:1.00px;height:46.10px;background:#dbbba2;"></div>
<div class="a" style="left:1036.70px;top:580.80px;width:1.00px;height:3.20px;background:#eef0f2;"></div>
<div class="a" style="left:1097.90px;top:534.70px;width:1.00px;height:46.10px;background:#dbbba2;"></div>
<div class="a" style="left:1097.90px;top:580.80px;width:1.00px;height:3.20px;background:#eef0f2;"></div>
<div class="t k" style="left:520.70px;top:538.00px;font-size:7.3px;color:#262d33;font-weight:400;">Office</div>
<div class="t k" style="left:520.70px;top:548.60px;font-size:7.3px;color:#262d33;font-weight:400;">Office</div>
<div class="t k" style="left:520.70px;top:559.20px;font-size:7.3px;color:#262d33;font-weight:400;">Name</div>
<div class="t k" style="left:570.20px;top:538.00px;font-size:7.3px;color:#262d33;font-weight:400;"><span style="letter-spacing:-0.25px">Target Name</span></div>
<div class="t k" style="left:657.00px;top:538.00px;font-size:7.3px;color:#262d33;font-weight:400;">Calls</div>
<div class="t k" style="left:657.00px;top:548.60px;font-size:7.3px;color:#262d33;font-weight:400;">Start</div>
<div class="t k" style="left:657.00px;top:559.20px;font-size:7.3px;color:#262d33;font-weight:400;">Date</div>
<div class="t k" style="left:704.20px;top:538.00px;font-size:7.3px;color:#262d33;font-weight:400;">Calls All</div>
<div class="t k" style="left:704.20px;top:548.60px;font-size:7.3px;color:#262d33;font-weight:400;">Calls</div>
<div class="t k" style="left:751.50px;top:538.00px;font-size:7.3px;color:#262d33;font-weight:400;">Calls</div>
<div class="t k" style="left:751.50px;top:548.60px;font-size:7.3px;color:#262d33;font-weight:400;">Handled</div>
<div class="t k" style="left:802.30px;top:538.00px;font-size:7.3px;color:#262d33;font-weight:400;">Calls Inbound</div>
<div class="t k" style="left:802.30px;top:548.60px;font-size:7.3px;color:#262d33;font-weight:400;">Connected</div>
<div class="t k" style="left:860.80px;top:538.00px;font-size:7.3px;color:#262d33;font-weight:400;">Calls</div>
<div class="t k" style="left:860.80px;top:548.60px;font-size:7.3px;color:#262d33;font-weight:400;">Outbound</div>
<div class="t k" style="left:860.80px;top:559.20px;font-size:7.3px;color:#262d33;font-weight:400;">Connected</div>
<div class="t k" style="left:919.70px;top:538.00px;font-size:7.3px;color:#262d33;font-weight:400;">Calls</div>
<div class="t k" style="left:919.70px;top:548.60px;font-size:7.3px;color:#262d33;font-weight:400;">Abandoned</div>
<div class="t k" style="left:979.80px;top:538.00px;font-size:7.3px;color:#262d33;font-weight:400;">Calls %</div>
<div class="t k" style="left:979.80px;top:548.60px;font-size:7.3px;color:#262d33;font-weight:400;">Abandoned</div>
<div class="t k" style="left:1040.70px;top:538.00px;font-size:7.3px;color:#262d33;font-weight:400;">Calls</div>
<div class="t k" style="left:1040.70px;top:548.60px;font-size:7.3px;color:#262d33;font-weight:400;">Manually</div>
<div class="t k" style="left:1040.70px;top:559.20px;font-size:7.3px;color:#262d33;font-weight:400;">Transferred</div>
<div class="t k" style="left:1101.30px;top:538.00px;font-size:7.3px;color:#262d33;font-weight:400;">Calls Avg.</div>
<div class="t k" style="left:1101.30px;top:548.60px;font-size:7.3px;color:#262d33;font-weight:400;">Connected</div>
<div class="t k" style="left:1101.30px;top:559.20px;font-size:7.3px;color:#262d33;font-weight:400;">Duration</div>
<svg class="a" style="left:0;top:0" width="1200" height="730" viewBox="0 0 1200 730"><path d="M563.85,540.68 L564.84,540.97 L564.84,542.43 L563.85,542.72 L563.59,543.35 L564.08,544.25 L563.05,545.28 L562.15,544.79 L561.52,545.05 L561.23,546.04 L559.77,546.04 L559.48,545.05 L558.85,544.79 L557.95,545.28 L556.92,544.25 L557.41,543.35 L557.15,542.72 L556.16,542.43 L556.16,540.97 L557.15,540.68 L557.41,540.05 L556.92,539.15 L557.95,538.12 L558.85,538.61 L559.48,538.35 L559.77,537.36 L561.23,537.36 L561.52,538.35 L562.15,538.61 L563.05,538.12 L564.08,539.15 L563.59,540.05Z" fill="none" stroke="#5d636b" stroke-width="0.8"/><circle cx="560.5" cy="541.7" r="1.5" fill="none" stroke="#5d636b" stroke-width="0.8"/><path d="M650.80,540.68 L651.79,540.97 L651.79,542.43 L650.80,542.72 L650.54,543.35 L651.03,544.25 L650.00,545.28 L649.10,544.79 L648.47,545.05 L648.18,546.04 L646.72,546.04 L646.43,545.05 L645.80,544.79 L644.90,545.28 L643.87,544.25 L644.36,543.35 L644.10,542.72 L643.11,542.43 L643.11,540.97 L644.10,540.68 L644.36,540.05 L643.87,539.15 L644.90,538.12 L645.80,538.61 L646.43,538.35 L646.72,537.36 L648.18,537.36 L648.47,538.35 L649.10,538.61 L650.00,538.12 L651.03,539.15 L650.54,540.05Z" fill="none" stroke="#5d636b" stroke-width="0.8"/><circle cx="647.45" cy="541.7" r="1.5" fill="none" stroke="#5d636b" stroke-width="0.8"/><path d="M697.85,540.68 L698.84,540.97 L698.84,542.43 L697.85,542.72 L697.59,543.35 L698.08,544.25 L697.05,545.28 L696.15,544.79 L695.52,545.05 L695.23,546.04 L693.77,546.04 L693.48,545.05 L692.85,544.79 L691.95,545.28 L690.92,544.25 L691.41,543.35 L691.15,542.72 L690.16,542.43 L690.16,540.97 L691.15,540.68 L691.41,540.05 L690.92,539.15 L691.95,538.12 L692.85,538.61 L693.48,538.35 L693.77,537.36 L695.23,537.36 L695.52,538.35 L696.15,538.61 L697.05,538.12 L698.08,539.15 L697.59,540.05Z" fill="none" stroke="#5d636b" stroke-width="0.8"/><circle cx="694.5" cy="541.7" r="1.5" fill="none" stroke="#5d636b" stroke-width="0.8"/><path d="M745.15,540.68 L746.14,540.97 L746.14,542.43 L745.15,542.72 L744.89,543.35 L745.38,544.25 L744.35,545.28 L743.45,544.79 L742.82,545.05 L742.53,546.04 L741.07,546.04 L740.78,545.05 L740.15,544.79 L739.25,545.28 L738.22,544.25 L738.71,543.35 L738.45,542.72 L737.46,542.43 L737.46,540.97 L738.45,540.68 L738.71,540.05 L738.22,539.15 L739.25,538.12 L740.15,538.61 L740.78,538.35 L741.07,537.36 L742.53,537.36 L742.82,538.35 L743.45,538.61 L744.35,538.12 L745.38,539.15 L744.89,540.05Z" fill="none" stroke="#5d636b" stroke-width="0.8"/><circle cx="741.8" cy="541.7" r="1.5" fill="none" stroke="#5d636b" stroke-width="0.8"/><path d="M796.15,540.68 L797.14,540.97 L797.14,542.43 L796.15,542.72 L795.89,543.35 L796.38,544.25 L795.35,545.28 L794.45,544.79 L793.82,545.05 L793.53,546.04 L792.07,546.04 L791.78,545.05 L791.15,544.79 L790.25,545.28 L789.22,544.25 L789.71,543.35 L789.45,542.72 L788.46,542.43 L788.46,540.97 L789.45,540.68 L789.71,540.05 L789.22,539.15 L790.25,538.12 L791.15,538.61 L791.78,538.35 L792.07,537.36 L793.53,537.36 L793.82,538.35 L794.45,538.61 L795.35,538.12 L796.38,539.15 L795.89,540.05Z" fill="none" stroke="#5d636b" stroke-width="0.8"/><circle cx="792.8" cy="541.7" r="1.5" fill="none" stroke="#5d636b" stroke-width="0.8"/><path d="M854.95,540.68 L855.94,540.97 L855.94,542.43 L854.95,542.72 L854.69,543.35 L855.18,544.25 L854.15,545.28 L853.25,544.79 L852.62,545.05 L852.33,546.04 L850.87,546.04 L850.58,545.05 L849.95,544.79 L849.05,545.28 L848.02,544.25 L848.51,543.35 L848.25,542.72 L847.26,542.43 L847.26,540.97 L848.25,540.68 L848.51,540.05 L848.02,539.15 L849.05,538.12 L849.95,538.61 L850.58,538.35 L850.87,537.36 L852.33,537.36 L852.62,538.35 L853.25,538.61 L854.15,538.12 L855.18,539.15 L854.69,540.05Z" fill="none" stroke="#5d636b" stroke-width="0.8"/><circle cx="851.6" cy="541.7" r="1.5" fill="none" stroke="#5d636b" stroke-width="0.8"/><path d="M913.15,540.68 L914.14,540.97 L914.14,542.43 L913.15,542.72 L912.89,543.35 L913.38,544.25 L912.35,545.28 L911.45,544.79 L910.82,545.05 L910.53,546.04 L909.07,546.04 L908.78,545.05 L908.15,544.79 L907.25,545.28 L906.22,544.25 L906.71,543.35 L906.45,542.72 L905.46,542.43 L905.46,540.97 L906.45,540.68 L906.71,540.05 L906.22,539.15 L907.25,538.12 L908.15,538.61 L908.78,538.35 L909.07,537.36 L910.53,537.36 L910.82,538.35 L911.45,538.61 L912.35,538.12 L913.38,539.15 L912.89,540.05Z" fill="none" stroke="#5d636b" stroke-width="0.8"/><circle cx="909.8" cy="541.7" r="1.5" fill="none" stroke="#5d636b" stroke-width="0.8"/><path d="M973.35,540.68 L974.34,540.97 L974.34,542.43 L973.35,542.72 L973.09,543.35 L973.58,544.25 L972.55,545.28 L971.65,544.79 L971.02,545.05 L970.73,546.04 L969.27,546.04 L968.98,545.05 L968.35,544.79 L967.45,545.28 L966.42,544.25 L966.91,543.35 L966.65,542.72 L965.66,542.43 L965.66,540.97 L966.65,540.68 L966.91,540.05 L966.42,539.15 L967.45,538.12 L968.35,538.61 L968.98,538.35 L969.27,537.36 L970.73,537.36 L971.02,538.35 L971.65,538.61 L972.55,538.12 L973.58,539.15 L973.09,540.05Z" fill="none" stroke="#5d636b" stroke-width="0.8"/><circle cx="970" cy="541.7" r="1.5" fill="none" stroke="#5d636b" stroke-width="0.8"/><path d="M1033.85,540.68 L1034.84,540.97 L1034.84,542.43 L1033.85,542.72 L1033.59,543.35 L1034.08,544.25 L1033.05,545.28 L1032.15,544.79 L1031.52,545.05 L1031.23,546.04 L1029.77,546.04 L1029.48,545.05 L1028.85,544.79 L1027.95,545.28 L1026.92,544.25 L1027.41,543.35 L1027.15,542.72 L1026.16,542.43 L1026.16,540.97 L1027.15,540.68 L1027.41,540.05 L1026.92,539.15 L1027.95,538.12 L1028.85,538.61 L1029.48,538.35 L1029.77,537.36 L1031.23,537.36 L1031.52,538.35 L1032.15,538.61 L1033.05,538.12 L1034.08,539.15 L1033.59,540.05Z" fill="none" stroke="#5d636b" stroke-width="0.8"/><circle cx="1030.5" cy="541.7" r="1.5" fill="none" stroke="#5d636b" stroke-width="0.8"/><path d="M1095.05,540.68 L1096.04,540.97 L1096.04,542.43 L1095.05,542.72 L1094.79,543.35 L1095.28,544.25 L1094.25,545.28 L1093.35,544.79 L1092.72,545.05 L1092.43,546.04 L1090.97,546.04 L1090.68,545.05 L1090.05,544.79 L1089.15,545.28 L1088.12,544.25 L1088.61,543.35 L1088.35,542.72 L1087.36,542.43 L1087.36,540.97 L1088.35,540.68 L1088.61,540.05 L1088.12,539.15 L1089.15,538.12 L1090.05,538.61 L1090.68,538.35 L1090.97,537.36 L1092.43,537.36 L1092.72,538.35 L1093.35,538.61 L1094.25,538.12 L1095.28,539.15 L1094.79,540.05Z" fill="none" stroke="#5d636b" stroke-width="0.8"/><circle cx="1091.7" cy="541.7" r="1.5" fill="none" stroke="#5d636b" stroke-width="0.8"/><path d="M1145.55,540.68 L1146.54,540.97 L1146.54,542.43 L1145.55,542.72 L1145.29,543.35 L1145.78,544.25 L1144.75,545.28 L1143.85,544.79 L1143.22,545.05 L1142.93,546.04 L1141.47,546.04 L1141.18,545.05 L1140.55,544.79 L1139.65,545.28 L1138.62,544.25 L1139.11,543.35 L1138.85,542.72 L1137.86,542.43 L1137.86,540.97 L1138.85,540.68 L1139.11,540.05 L1138.62,539.15 L1139.65,538.12 L1140.55,538.61 L1141.18,538.35 L1141.47,537.36 L1142.93,537.36 L1143.22,538.35 L1143.85,538.61 L1144.75,538.12 L1145.78,539.15 L1145.29,540.05Z" fill="none" stroke="#5d636b" stroke-width="0.8"/><circle cx="1142.2" cy="541.7" r="1.5" fill="none" stroke="#5d636b" stroke-width="0.8"/><path d="M1101.8,573.8 Q1105.3,570.3 1108.8,573.8 Q1105.3,577.3 1101.8,573.8Z" fill="none" stroke="#262d33" stroke-width="1"/><circle cx="1105.3" cy="573.8" r="1.1" fill="#262d33"/><path d="M1103,576.6 L1107.2,570.8" stroke="#262d33" stroke-width="0.9"/></svg>
<svg class="a" style="left:541.8px;top:559.6px" width="10" height="7"><path d="M2.2,0.3 V5.6 M0.2,3.6 L2.2,5.9 L4.2,3.6" fill="none" stroke="#262d33" stroke-width="1.1"/><path d="M7.4,1.8 V2.6 M7.4,4.2 V5" stroke="#555" stroke-width="0.8"/></svg>
<svg class="a" style="left:612.2px;top:538.6px" width="10" height="7"><path d="M2.2,0.3 V5.6 M0.2,3.6 L2.2,5.9 L4.2,3.6" fill="none" stroke="#262d33" stroke-width="1.1"/><path d="M7.4,1.8 V2.6 M7.4,4.2 V5" stroke="#555" stroke-width="0.8"/></svg>
<div class="a" style="left:1150.30px;top:534.70px;width:8.70px;height:49.30px;background:#f6f7f8;"></div>
<div class="a" style="left:1152.00px;top:534.00px;width:4.70px;height:7.00px;background:#b8bcc2;border-radius:2px"></div>
<div class="a" style="left:1003.5px;top:131px;width:153.5px;height:134px;background:#fff;border-radius:6px;box-shadow:0 2px 5px rgba(0,0,0,0.25),0 1px 2px rgba(0,0,0,0.12)"></div>
<div class="t" style="left:1015.20px;top:144.70px;font-size:13.8px;color:#1f1f27;font-weight:400;">Duplicate</div>
<div class="t" style="left:1015.20px;top:190.10px;font-size:13.8px;color:#1f1f27;font-weight:400;">Edit name</div>
<div class="t" style="left:1015.20px;top:236.20px;font-size:13.8px;color:#e2362d;font-weight:400;">Delete</div>
</body></html>
